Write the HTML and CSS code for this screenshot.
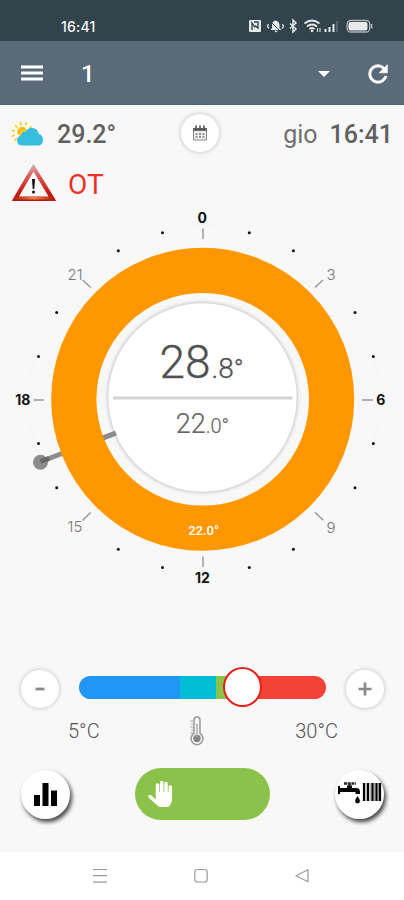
FILE: index.html
```
<!DOCTYPE html>
<html lang="it">
<head>
    <meta charset="UTF-8">
    <meta name="viewport" content="width=device-width, initial-scale=1">
    <title>Termostato</title>
    <link rel="stylesheet" href="styles.css">
</head>
<body>
    <div class="status-bar">
        <span class="status-time">16:41</span>
        <svg class="status-icons" width="128" height="16" viewBox="0 0 128 16">
            <!-- nfc -->
            <rect x="1" y="2" width="12" height="12" rx="1" fill="#e4e9eb"/>
            <path d="M4 12V5l3 4.500M6 4h4v6l-3-2.500" fill="none" stroke="#33434c" stroke-width="1.300"/>
            <!-- bell -->
            <path d="M22.500 12l1.500-2V7q0-4 3.500-4.500Q31 3 31.500 7v3l2 2zM26 12.800h4l-2 1.700z" fill="#e4e9eb"/>
            <path d="M20.500 6l-1 2.500 1.500 2M34.500 6l1 2.500-1.500 2" fill="none" stroke="#c4ccd0" stroke-width="1.500"/>
            <path d="M22 3l11 11" stroke="#33434c" stroke-width="1"/>
            <!-- bluetooth -->
            <path d="M42 5.500l6 5.500-3 3V2l3 3-6 5.500" fill="none" stroke="#e4e9eb" stroke-width="1.500"/>
            <!-- wifi -->
            <path d="M56.500 5.500q7.500-6 15 0M59 8.500q5-4 10 0M61.500 11q2.500-2 5 0" fill="none" stroke="#e4e9eb" stroke-width="1.700"/>
            <circle cx="64" cy="13" r="1.300" fill="#e4e9eb"/>
            <path d="M69.500 10v4M72 10v4" stroke="#c4ccd0" stroke-width="1.300"/>
            <!-- signal -->
            <path d="M77.500 11v3M81.500 9v5M85.500 6v8" stroke="#e4e9eb" stroke-width="2"/>
            <path d="M89 3v11" stroke="#55646d" stroke-width="2"/>
            <!-- battery -->
            <rect x="99.200" y="2.500" width="22.500" height="11.500" rx="3.500" fill="none" stroke="#a9b3b8" stroke-width="1.300"/>
            <rect x="100.500" y="4" width="19" height="8.500" rx="2" fill="#e8eaeb"/>
            <path d="M123.500 6v4.500" stroke="#a9b3b8" stroke-width="1.800"/>
        </svg>
    </div>

    <header class="app-bar">
        <svg class="menu" width="22" height="17" viewBox="0 0 22 17">
            <path d="M0 2h22M0 8h22M0 14h22" stroke="#fff" stroke-width="2.800"/>
        </svg>
        <span class="zone">1</span>
        <svg class="caret" width="12" height="6" viewBox="0 0 12 6"><path d="M0 0h12L6 6z" fill="#fff"/></svg>
        <svg class="refresh" width="28" height="28" viewBox="0 0 24 24">
            <path d="M17.650 6.350A7.960 7.960 0 0 0 12 4a8 8 0 1 0 7.730 10h-2.080A6 6 0 1 1 12 6c1.660 0 3.140.69 4.220 1.780L13 11h7V4z" fill="#fff" stroke="#fff" stroke-width=".6"/>
        </svg>
    </header>

    <main class="screen">
        <div class="weather-row">
            <svg class="weather" width="36" height="26" viewBox="0 0 36 26">
                <g stroke="#f3cf1c" stroke-width="1.700" stroke-linecap="round">
                    <path d="M9.500 1.500l.4 2M15.500 2l-.7 1.700M20 6l-1.300.9M4.500 4.500l1.300 1.400M1.500 9.500l1.800.5M1.500 15l1.800-.7M4 19l1.200-1"/>
                </g>
                <circle cx="11" cy="10.500" r="4.800" fill="#f5c81a"/>
                <path d="M7 13q2-6 7-6" stroke="#f5a623" fill="none" stroke-width="1"/>
                <path d="M11 24.500a5 5 0 0 1-1.300-9.800 4 4 0 0 1 4.800-3.800 7 7 0 0 1 13.200 2.200 6 6 0 0 1 .3 11.400z" fill="#37bddd"/>
            </svg>
            <span class="outside">29.2°</span>
            <button class="round calendar">
                <svg width="16" height="16" viewBox="0 0 16 16">
                    <path d="M1 3h14v4H1z" fill="#666"/>
                    <path d="M4 .5v4M8 .5v4M12 .5v4" stroke="#444" stroke-width="1.500"/>
                    <path d="M1.500 6v9h13V6" fill="#eee" stroke="#888"/>
                    <path d="M3.500 9h2M7 9h2M10.500 9h2M3.500 12h2M7 12h2M10.500 12h2" stroke="#777" stroke-width="1.700"/>
                </svg>
            </button>
            <span class="day">gio</span>
            <span class="clock">16:41</span>
        </div>

        <div class="alert-row">
            <svg width="46" height="40" viewBox="0 0 46 40">
                <defs>
                    <linearGradient id="warn" x1="0" y1="0" x2="0" y2="1">
                        <stop offset="0" stop-color="#d8b4b4"/>
                        <stop offset=".35" stop-color="#d8564f"/>
                        <stop offset=".75" stop-color="#c91f14"/>
                        <stop offset="1" stop-color="#b01c10"/>
                    </linearGradient>
                    <linearGradient id="warnBase">
                        <stop offset="0" stop-color="#b51d10"/>
                        <stop offset=".5" stop-color="#f5803a"/>
                        <stop offset="1" stop-color="#b51d10"/>
                    </linearGradient>
                </defs>
                <path d="M22.500 1.500L44.500 37.500H1.500z" fill="url(#warn)" stroke="url(#warn)" stroke-width="1" stroke-linejoin="round"/>
                <path d="M5 34h36l1.500 2.500h-39z" fill="url(#warnBase)"/>
                <path d="M22.500 8.500L37.500 33.500H8z" fill="#fbfafa"/>
                <path d="M21 16h3l-.7 10h-1.600z" fill="#111"/>
                <circle cx="22.500" cy="29" r="1.500" fill="#111"/>
            </svg>
            <span class="alert">OT</span>
        </div>

        <svg class="dial" width="404" height="400" viewBox="0 205 404 400">
            <circle cx="204" cy="400" r="175" class="halo"/>
            <!-- hand, goes under the ring -->
            <path d="M41 461.500L116 433" class="hand"/>
            <circle cx="40.500" cy="462.300" r="7.500" fill="#8c8c8c"/>
            <path d="M40.500 461.500L49 458.500" stroke="#686868" stroke-width="5"/>
            <circle cx="202.500" cy="397.500" r="94.200" class="face"/>
            <path d="M103 438L116 433" class="hand"/>
            <circle cx="202.700" cy="399.300" r="128.900" class="ring"/>

            <!-- hour dots -->
            <g class="dots">
                <circle cx="249.300" cy="232.800" r="1.500"/><circle cx="293.400" cy="250.800" r="1.500"/>
                <circle cx="355" cy="312.500" r="1.500"/><circle cx="373.300" cy="356.500" r="1.500"/>
                <circle cx="373.300" cy="443.600" r="1.500"/><circle cx="355" cy="487.700" r="1.500"/>
                <circle cx="293.400" cy="549.300" r="1.500"/><circle cx="249.300" cy="567.400" r="1.500"/>
                <circle cx="162.500" cy="567.400" r="1.500"/><circle cx="118.300" cy="549.300" r="1.500"/>
                <circle cx="56.700" cy="487.700" r="1.500"/><circle cx="38.500" cy="443.600" r="1.500"/>
                <circle cx="38.500" cy="356.500" r="1.500"/><circle cx="56.700" cy="312.500" r="1.500"/>
                <circle cx="118.300" cy="250.800" r="1.500"/><circle cx="162.500" cy="232.800" r="1.500"/>
            </g>
            <path class="ticks" d="M203 228.500V239M203 556.500V567M33.500 400H44M362 400h11M82.700 280l8 7.500M315 287.500l8-7.500M315 512.300l8.300 8M82.500 520.500l8-8"/>

            <g class="main-hours">
                <text x="202.300" y="223.200">0</text>
                <text x="380.700" y="405.300">6</text>
                <text x="202.500" y="582.700">12</text>
                <text x="22.800" y="405.300">18</text>
            </g>
            <g class="hours">
                <text x="331" y="279.500">3</text>
                <text x="331" y="532.500">9</text>
                <text x="75" y="532">15</text>
                <text x="75" y="279.500">21</text>
            </g>

            <text x="159.500" y="378" class="now">28<tspan class="now-dec" dx="1">.8</tspan><tspan class="now-deg">°</tspan></text>
            <path d="M113 398H292.500" stroke="#d4d4d4" stroke-width="3"/>
            <text x="175.700" y="433" class="target">22<tspan class="target-dec">.0°</tspan></text>
            <text x="203.500" y="535" class="arc-temp">22.0°</text>
        </svg>

        <div class="slider-row">
            <button class="round">
                <svg width="12" height="12" viewBox="0 0 12 12"><path d="M1.500 6h9" stroke="#888" stroke-width="2.700"/></svg>
            </button>
            <div class="track">
                <i class="cold"></i><i class="cool"></i><i class="mild"></i><i class="hot"></i>
                <span class="thumb"></span>
            </div>
            <button class="round">
                <svg width="14" height="14" viewBox="0 0 14 14"><path d="M.5 7h13M7 .5v13" stroke="#888" stroke-width="2.700"/></svg>
            </button>
        </div>

        <div class="range-row">
            <span>5°C</span>
            <svg width="16" height="30" viewBox="0 0 16 30">
                <path d="M5 4a3 3 0 0 1 6 0v13.500a6 6 0 1 1-6 0z" fill="#f5f5f5" stroke="#999" stroke-width="1.500"/>
                <circle cx="8" cy="22.500" r="3.700" fill="#858585"/>
                <path d="M8 8v13" stroke="#aaa" stroke-width="1.400"/>
                <path d="M1 5h3M2 8h2M1 11h3M2 14h2M1 17h3" stroke="#aaa"/>
            </svg>
            <span>30°C</span>
        </div>

        <div class="actions">
            <button class="raised">
                <svg width="23" height="23" viewBox="0 0 23 23"><path d="M0 12h6v11H0zM8.500 0h6v23h-6zM17 7.500h6V23h-6z"/></svg>
            </button>
            <button class="manual">
                <svg width="25" height="28" viewBox="0 0 25 28">
                    <g fill="none" stroke="#fff" stroke-linecap="round">
                        <path d="M9.500 15V5M13.700 15V2.500M18 15V3.500M22.300 17V7" stroke-width="3.500"/>
                        <path d="M2 16.500l6.500 6" stroke-width="3.500"/>
                    </g>
                    <path d="M7.800 12H24v8q-.3 3-2 5l-1.500 2H12q-2-.5-3.500-2.500L6 21l1.800-1z" fill="#fff"/>
                </svg>
            </button>
            <button class="raised">
                <svg width="44" height="24" viewBox="0 0 44 24">
                    <!-- tap -->
                    <path d="M0 4h2v2h7V3.500h5V6h4q4 0 4 4v2h-4.500v-2H2v2H0z"/>
                    <path d="M11.500 2v3" stroke="#000" stroke-width="2"/>
                    <path d="M6 1.500h12" stroke="#222" stroke-width="2.500" stroke-dasharray="3 .7"/>
                    <path d="M19.500 14q-5 7 0 7.500 5-.5 0-7.500z"/>
                    <!-- radiator -->
                    <path d="M26 1v18M30 1v18M34.500 1v18M38.500 1v18M42 1v18" stroke="#000" stroke-width="2.200"/>
                    <path d="M28 1v18M32.300 1v18M36.500 1v18M40.500 1v18" stroke="#777" stroke-width=".7"/>
                </svg>
            </button>
        </div>
    </main>

    <nav class="system-nav">
        <svg width="14" height="16" viewBox="0 0 14 16"><path d="M0 1.500h14M0 7.700h14M0 14.200h14" stroke="#999" stroke-width="1.200"/></svg>
        <svg width="14" height="16" viewBox="0 0 14 16"><rect x=".8" y="1.500" width="12.400" height="12.500" rx="2.500" fill="none" stroke="#999" stroke-width="1.200"/></svg>
        <svg width="14" height="16" viewBox="0 0 14 16"><path d="M13 1.700v12L1 7.700z" fill="none" stroke="#999" stroke-width="1.200" stroke-linejoin="round"/></svg>
    </nav>
</body>
</html>
```
FILE: styles.css
```
* {
    box-sizing: border-box;
}

body {
    margin: 0;
    width: 404px;
    height: 900px;
    display: flex;
    flex-direction: column;
    overflow: hidden;
    font-family: Roboto, "Liberation Sans", sans-serif;
    color: #606060;
    background: #fff;
}

svg {
    display: block;
    flex: none;
}

button {
    padding: 0;
    border: 0;
    display: flex;
    align-items: center;
    justify-content: center;
    background: #fff;
}

/* top bars */
.status-bar {
    flex: none;
    height: 41px;
    padding: 12px 30px 0 61px;
    display: flex;
    justify-content: space-between;
    background: #33434c;
}
.status-time {
    font: 500 14px/29px Inter, sans-serif;
    letter-spacing: .2px;
    color: #f2f5f6;
}
.status-icons {
    margin: 6px -2px 0 0;
}
.app-bar {
    flex: none;
    height: 64px;
    padding: 2px 12px 0 21px;
    display: flex;
    align-items: center;
    background: #5a6a78;
    border-bottom: 1px solid #53616e;
}
.zone {
    margin-left: 38px;
    font-size: 24px;
    font-weight: 500;
    color: #fff;
}
.caret {
    margin-left: auto;
}
.refresh {
    margin-left: 34px;
}

/* content */
.screen {
    flex: none;
    height: 747px;
    background: #f8f8f8;
}
.weather-row {
    height: 56px;
    padding: 1px 11px 0 11px;
    display: flex;
    align-items: center;
}
.outside {
    width: 124px;
    padding: 1px 0 0 10px;
    font-size: 25px;
    font-weight: 500;
}
.day {
    margin-left: auto;
    padding-top: 1px;
    font-size: 25px;
    color: #707070;
}
.clock {
    margin-left: 12px;
    padding-top: 1px;
    font-size: 25px;
    font-weight: 500;
}
.round {
    width: 38px;
    height: 38px;
    flex: none;
    border-radius: 50%;
    box-shadow: 0 0 3px 2px #dedede;
}
.calendar {
    margin: 0 0 2px 10px;
}
.alert-row {
    height: 44px;
    padding-left: 11px;
    display: flex;
    align-items: center;
}
.alert {
    margin: 2px 0 0 11px;
    font-size: 28px;
    color: #ee3129;
}

/* dial */
.halo {
    fill: none;
    stroke: #f5f5f5;
}
.hand {
    stroke: #8c8c8c;
    stroke-width: 5;
}
.ring {
    fill: none;
    stroke: #ff9800;
    stroke-width: 45.200;
}
.face {
    fill: #fff;
    filter: drop-shadow(0 0 2px #aaa);
}
.dots {
    fill: #111;
}
.ticks {
    fill: none;
    stroke: #999;
    stroke-width: 1.500;
}
.main-hours {
    font: 700 14px Inter, sans-serif;
    fill: #111;
    text-anchor: middle;
}
.hours {
    font: 300 15px Inter, sans-serif;
    fill: #777;
    text-anchor: middle;
}
.now {
    font-size: 46px;
    font-weight: 300;
    fill: #505050;
    stroke: #505050;
    stroke-width: .3;
}
.now-dec {
    font-size: 28px;
}
.now-deg {
    font-size: 26px;
}
.target {
    font-size: 27px;
    font-weight: 300;
    fill: #666;
    stroke: #666;
    stroke-width: .2;
}
.target-dec {
    font-size: 20px;
}
.arc-temp {
    font-size: 13px;
    font-weight: 500;
    fill: #fff;
    text-anchor: middle;
}

/* slider */
.slider-row {
    margin-top: 65px;
    height: 38px;
    padding: 0 20px 0 21px;
    display: flex;
    align-items: center;
    justify-content: space-between;
}
.track {
    position: relative;
    width: 247px;
    height: 23px;
    margin-bottom: 4px;
    display: flex;
    border-radius: 12px;
}
.cold {
    width: 101px;
    border-radius: 12px 0 0 12px;
    background: #2196f3;
}
.cool {
    width: 36px;
    background: #00bcd4;
}
.mild {
    width: 18px;
    background: #8bc34a;
}
.hot {
    flex: 1;
    border-radius: 0 12px 12px 0;
    background: #f44336;
}
.thumb {
    position: absolute;
    left: 144px;
    top: -9px;
    width: 39px;
    height: 40px;
    border: 2px solid #e51f17;
    border-radius: 50%;
    background: #fff;
}
.range-row {
    height: 46px;
    padding: 0 66px 0 68px;
    display: flex;
    align-items: center;
    justify-content: space-between;
    font-size: 20px;
    font-weight: 300;
    color: #555;
}

/* bottom buttons */
.actions {
    margin-top: 14px;
    padding: 0 20px 0 21px;
    display: flex;
    align-items: center;
    justify-content: space-between;
}
.raised {
    width: 49px;
    height: 49px;
    border-radius: 50%;
    box-shadow: 2px 3px 4px #444;
}
.manual {
    width: 135px;
    height: 52px;
    padding-left: 13px;
    justify-content: flex-start;
    border-radius: 26px;
    background: #8bc34a;
}

.system-nav {
    flex: 1;
    padding: 0 95px 0 93px;
    display: flex;
    align-items: center;
    justify-content: space-between;
}
```
